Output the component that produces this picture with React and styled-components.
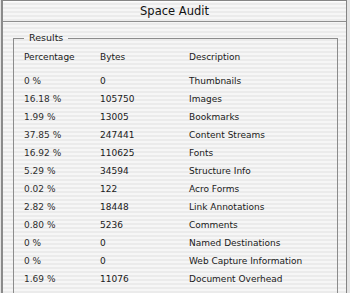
import React from "react";
import styled, { createGlobalStyle } from "styled-components";

const GlobalStyle = createGlobalStyle`
  html, body {
    margin: 0;
    padding: 0;
    background: #e4e4e4;
  }
`;

const pinstripe = `repeating-linear-gradient(
  to bottom,
  #f6f6f6 0px,
  #f6f6f6 2px,
  #ebebeb 2px,
  #ebebeb 4px
)`;

const Window = styled.div`
  box-sizing: border-box;
  width: 346px;
  height: 293px;
  margin-left: 1px;
  border: 1px solid #858585;
  border-bottom: none;
  border-left: 2px solid #8a8a8a;
  overflow: hidden;
  background: ${pinstripe};
  font-family: "DejaVu Sans", "Liberation Sans", sans-serif;
  color: #1e1e1e;
`;

const TitleBar = styled.div`
  height: 20px;
  border-bottom: 1px solid #8e8e8e;
  display: flex;
  align-items: center;
  justify-content: center;
  font-size: 11.5px;
  color: #111;
  background: ${pinstripe};
  box-shadow: inset 0 1px 0 #fdfdfd;
`;

const Body = styled.div`
  padding: 10px 8px 0 10px;
`;

const Group = styled.fieldset`
  margin: 0;
  padding: 7px 0 0 10px;
  border: 1px solid #8c8c8c;
  border-bottom: none;
  min-height: 300px;
`;

const Legend = styled.legend`
  margin-left: 0;
  padding: 0 5px;
  font-size: 9.5px;
  line-height: 12px;
  color: #1a1a1a;
`;

const Table = styled.div`
  display: grid;
  grid-template-columns: 76px 89px 1fr;
  grid-template-rows: 21px;
  grid-auto-rows: 18px;
  font-size: 9px;
  align-items: center;
`;

const HeaderCell = styled.div`
  align-self: start;
  line-height: 12px;
  color: #1a1a1a;
`;

const Cell = styled.div`
  white-space: nowrap;
  color: ${(p) => (p.$muted ? "#2e2e2e" : "#1a1a1a")};
`;

const rows = [
  ["0 %", "0", "Thumbnails"],
  ["16.18 %", "105750", "Images"],
  ["1.99 %", "13005", "Bookmarks"],
  ["37.85 %", "247441", "Content Streams"],
  ["16.92 %", "110625", "Fonts"],
  ["5.29 %", "34594", "Structure Info"],
  ["0.02 %", "122", "Acro Forms"],
  ["2.82 %", "18448", "Link Annotations"],
  ["0.80 %", "5236", "Comments"],
  ["0 %", "0", "Named Destinations"],
  ["0 %", "0", "Web Capture Information"],
  ["1.69 %", "11076", "Document Overhead"],
];

export default function App() {
  return (
    <>
      <GlobalStyle />
      <Window>
        <TitleBar>Space Audit</TitleBar>
        <Body>
          <Group>
            <Legend>Results</Legend>
            <Table>
              <HeaderCell>Percentage</HeaderCell>
              <HeaderCell>Bytes</HeaderCell>
              <HeaderCell>Description</HeaderCell>
              {rows.map(([pct, bytes, desc], i) => (
                <React.Fragment key={i}>
                  <Cell $muted>{pct}</Cell>
                  <Cell>{bytes}</Cell>
                  <Cell>{desc}</Cell>
                </React.Fragment>
              ))}
            </Table>
          </Group>
        </Body>
      </Window>
    </>
  );
}
